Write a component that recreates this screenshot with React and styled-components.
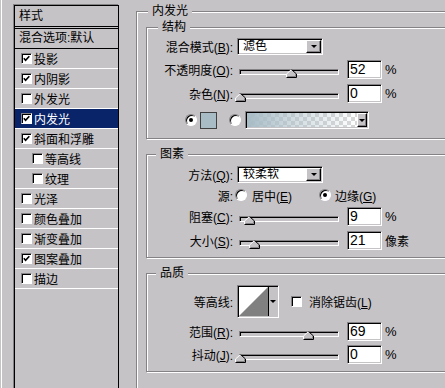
import React from 'react';
import styled, { createGlobalStyle } from 'styled-components';

const FACE = '#c6c3c6';
const SHADOW = '#848284';
const NAVY = '#0a246a';

const Global = createGlobalStyle`
  html, body { margin: 0; padding: 0; background: ${FACE}; overflow: hidden; }
  body {
    font-family: "Liberation Sans", "Noto Sans CJK SC", sans-serif;
    font-size: 12px;
    color: #000;
  }
  u { text-decoration: underline; text-underline-offset: 1px; }
`;

const Dialog = styled.div`
  display: flex;
  align-items: flex-start;
  width: 444px;
  height: 388px;
  overflow: hidden;
  margin-left: 1px;
  border-left: 1px solid #fff;
  box-sizing: border-box;
`;

/* ---------- left style list ---------- */
const StyleList = styled.div`
  flex: none;
  width: 105px;
  height: 400px;
  margin: 5px 0 0 12px;
  box-sizing: border-box;
  border: 1px solid #000;
  box-shadow: -1px -1px 0 ${SHADOW};
  background: ${FACE};
  display: flex;
  flex-direction: column;
`;

const ListHeader = styled.div`
  height: 20px;
  line-height: 20px;
  padding-left: 4px;
  border-bottom: 3px double #000;
`;

const BlendRow = styled.div`
  height: 19px;
  line-height: 19px;
  padding-left: 4px;
  border-bottom: 1px solid #000;
`;

const ListItem = styled.div`
  height: 19px;
  display: flex;
  align-items: center;
  gap: 2px;
  padding-left: ${p => (p.$sub ? 17 : 6)}px;
  border-bottom: 1px solid #fff;
  background: ${p => (p.$active ? NAVY : 'transparent')};
  color: ${p => (p.$active ? '#fff' : '#000')};
  white-space: nowrap;
`;

const CheckBox = styled.span`
  flex: none;
  width: 11px;
  height: 11px;
  box-sizing: border-box;
  background: #fff;
  border: 1px solid;
  border-color: ${SHADOW} #fff #fff ${SHADOW};
  box-shadow: inset 1px 1px 0 #000;
  display: flex;
  align-items: center;
  justify-content: center;
  margin-left: ${p => p.$ml || 0}px;
`;

const Check = ({ on, ml }) => (
  <CheckBox $ml={ml}>
    {on && (
      <svg width="7" height="7" viewBox="0 0 7 7">
        <path d="M0.8 3.2 L2.6 5.2 L6.3 1.2" stroke="#000" strokeWidth="1.6" fill="none" />
      </svg>
    )}
  </CheckBox>
);

/* ---------- right panel ---------- */
const OuterGroup = styled.div`
  flex: none;
  width: 340px;
  margin: 11px 0 0 17px;
  border: 1px solid ${SHADOW};
  box-shadow: inset 1px 1px 0 #fff, 1px 1px 0 #fff;
  padding: 0 9px 30px 9px;
  display: flex;
  flex-direction: column;
`;

const GroupBox = styled.div`
  border: 1px solid ${SHADOW};
  box-shadow: inset 1px 1px 0 #fff, 1px 1px 0 #fff;
  margin-top: ${p => p.$mt}px;
  padding-bottom: ${p => p.$pb}px;
  display: flex;
  flex-direction: column;
`;

const GroupTitle = styled.div`
  align-self: flex-start;
  height: 14px;
  line-height: 14px;
  margin: -8px 0 0 ${p => p.$ml}px;
  padding: 0 4px;
  background: ${FACE};
  white-space: nowrap;
`;

const Row = styled.div`
  height: ${p => p.$h}px;
  display: flex;
  align-items: center;
  padding-left: ${p => p.$pl || 0}px;
  white-space: nowrap;
`;

const Label = styled.span`
  flex: none;
  width: 86px;
  text-align: right;
`;

const Select = styled.div`
  flex: none;
  width: 86px;
  height: 17px;
  margin-left: 4px;
  box-sizing: border-box;
  border: 1px solid;
  border-color: ${SHADOW} #fff #fff ${SHADOW};
  box-shadow: inset 1px 1px 0 #000, inset -1px -1px 0 ${FACE};
  background: #fff;
  display: flex;
  align-items: center;
  padding: 0 1px 0 5px;
`;

const SelectText = styled.span`
  flex: 1;
  line-height: 14px;
`;

const DropButton = styled.span`
  flex: none;
  width: ${p => p.$w || 15}px;
  height: ${p => p.$h || 13}px;
  box-sizing: border-box;
  background: ${FACE};
  border: 1px solid;
  border-color: #fff #000 #000 #fff;
  box-shadow: inset -1px -1px 0 ${SHADOW};
  display: flex;
  align-items: center;
  justify-content: center;
`;

const Arrow = styled.span`
  width: 0;
  height: 0;
  border-left: 3px solid transparent;
  border-right: 3px solid transparent;
  border-top: 3px solid #000;
`;

const SliderWrap = styled.div`
  flex: none;
  position: relative;
  width: 110px;
  height: 12px;
  margin-left: 2px;
`;

const Track = styled.div`
  height: 6px;
  margin: 5px 6px 0 4px;
  box-sizing: border-box;
  border: 1px solid;
  border-color: ${SHADOW} #fff #fff ${SHADOW};
  box-shadow: inset 1px 1px 0 #000;
  background: ${FACE};
`;

const Thumb = styled.svg`
  position: absolute;
  top: 5px;
  display: block;
`;

const Slider = ({ pct }) => (
  <SliderWrap>
    <Track />
    <Thumb width="11" height="9" viewBox="0 0 11 9" style={{ left: Math.round(pct * 0.98) }}>
      <path d="M5.5 0.5 L10.5 5 V8.5 H0.5 V5 Z" fill={FACE} />
      <path d="M0.5 8.5 V5 L5.5 0.5" stroke="#fff" fill="none" />
      <path d="M5.5 0.5 L10.5 5 V8.5 H0.5" stroke="#000" fill="none" />
      <path d="M9.5 5.4 V7.5 H1.5" stroke={SHADOW} fill="none" />
    </Thumb>
  </SliderWrap>
);

const Field = styled.div`
  flex: none;
  width: 35px;
  height: 19px;
  margin-left: 2px;
  box-sizing: border-box;
  border: 1px solid;
  border-color: ${SHADOW} #fff #fff ${SHADOW};
  box-shadow: inset 1px 1px 0 #000, inset -1px -1px 0 ${FACE};
  background: #fff;
  font-size: 14px;
  line-height: 17px;
  padding-left: 2px;
`;

const Unit = styled.span`
  margin-left: 3px;
  font-size: ${p => (p.$cjk ? 12 : 13)}px;
`;

const Radio = styled.span`
  flex: none;
  width: 12px;
  height: 12px;
  box-sizing: border-box;
  border-radius: 50%;
  border: 1px solid;
  border-color: ${SHADOW} #fff #fff ${SHADOW};
  box-shadow: inset 1px 1px 0 #000;
  background: #fff;
  display: flex;
  align-items: center;
  justify-content: center;
  margin-left: ${p => p.$ml || 0}px;
  &::after {
    content: '';
    width: 4px;
    height: 4px;
    border-radius: 50%;
    background: #000;
    display: ${p => (p.$on ? 'block' : 'none')};
  }
`;

const Swatch = styled.span`
  flex: none;
  width: 17px;
  height: 17px;
  margin-left: 3px;
  box-sizing: border-box;
  border: 1px solid #404040;
  background: #a8bcc6;
`;

const GradientPicker = styled.div`
  flex: none;
  width: 124px;
  height: 18px;
  margin-left: 4px;
  box-sizing: border-box;
  border: 1px solid;
  border-color: ${SHADOW} #fff #fff ${SHADOW};
  box-shadow: inset 1px 1px 0 #000, inset -1px -1px 0 ${FACE};
  display: flex;
  padding: 1px 1px 1px 1px;
`;

const GradientStrip = styled.span`
  flex: 1;
  background:
    linear-gradient(to right, #a8bcc6 0%, rgba(168, 188, 198, 0.55) 40%, rgba(168, 188, 198, 0) 100%),
    repeating-conic-gradient(#d8d8d8 0 25%, #ffffff 0 50%) 0 0 / 8px 8px;
`;

const OptionText = styled.span`
  margin-left: ${p => p.$ml || 5}px;
`;

const Option = styled.span`
  flex: none;
  display: flex;
  align-items: center;
  width: ${p => (p.$w ? `${p.$w}px` : 'auto')};
  margin-left: ${p => p.$ml || 0}px;
`;

const ContourPicker = styled.div`
  flex: none;
  width: 42px;
  height: 33px;
  margin-left: 4px;
  box-sizing: border-box;
  border: 1px solid;
  border-color: ${SHADOW} #fff #fff ${SHADOW};
  box-shadow: inset 1px 1px 0 #000, inset -1px -1px 0 ${FACE};
  display: flex;
  padding: 1px 1px 1px 1px;
`;

const ContourPreview = styled.svg`
  display: block;
  flex: none;
  border-right: 1px solid #000;
`;

const ContourArrow = styled.span`
  flex: 1;
  background: ${FACE};
  display: flex;
  align-items: center;
  justify-content: center;
`;

const items = [
  { t: '投影', on: true },
  { t: '内阴影', on: true },
  { t: '外发光', on: false },
  { t: '内发光', on: true, active: true },
  { t: '斜面和浮雕', on: true },
  { t: '等高线', on: false, sub: true },
  { t: '纹理', on: false, sub: true },
  { t: '光泽', on: false },
  { t: '颜色叠加', on: false },
  { t: '渐变叠加', on: false },
  { t: '图案叠加', on: true },
  { t: '描边', on: false },
];

export default function App() {
  return (
    <>
      <Global />
      <Dialog>
        <StyleList>
          <ListHeader>样式</ListHeader>
          <BlendRow>混合选项:默认</BlendRow>
          {items.map(it => (
            <ListItem key={it.t} $sub={it.sub} $active={it.active}>
              <Check on={it.on} />
              <span>{it.t}</span>
            </ListItem>
          ))}
        </StyleList>

        <OuterGroup>
          <GroupTitle $ml={2}>内发光</GroupTitle>

          <GroupBox $mt={9} $pb={4}>
            <GroupTitle $ml={11}>结构</GroupTitle>
            <Row $h={24}>
              <Label>混合模式(<u>B</u>):</Label>
              <Select>
                <SelectText>滤色</SelectText>
                <DropButton><Arrow /></DropButton>
              </Select>
            </Row>
            <Row $h={23}>
              <Label>不透明度(<u>O</u>):</Label>
              <Slider pct={52} />
              <Field>52</Field>
              <Unit>%</Unit>
            </Row>
            <Row $h={25}>
              <Label>杂色(<u>N</u>):</Label>
              <Slider pct={0} />
              <Field>0</Field>
              <Unit>%</Unit>
            </Row>
            <Row $h={28} $pl={38}>
              <Radio $on />
              <Swatch />
              <Radio $ml={12} />
              <GradientPicker>
                <GradientStrip />
                <DropButton $w={10} $h={14}><Arrow /></DropButton>
              </GradientPicker>
            </Row>
          </GroupBox>

          <GroupBox $mt={15} $pb={6}>
            <GroupTitle $ml={9}>图素</GroupTitle>
            <Row $h={26}>
              <Label>方法(<u>Q</u>):</Label>
              <Select>
                <SelectText>较柔软</SelectText>
                <DropButton><Arrow /></DropButton>
              </Select>
            </Row>
            <Row $h={16}>
              <Label>源:</Label>
              <Option $w={84} $ml={2}>
                <Radio />
                <OptionText>居中(<u>E</u>)</OptionText>
              </Option>
              <Option>
                <Radio $on />
                <OptionText $ml={4}>边缘(<u>G</u>)</OptionText>
              </Option>
            </Row>
            <Row $h={27}>
              <Label>阻塞(<u>C</u>):</Label>
              <Slider pct={9} />
              <Field>9</Field>
              <Unit>%</Unit>
            </Row>
            <Row $h={21}>
              <Label>大小(<u>S</u>):</Label>
              <Slider pct={14} />
              <Field>21</Field>
              <Unit $cjk>像素</Unit>
            </Row>
          </GroupBox>

          <GroupBox $mt={15} $pb={3}>
            <GroupTitle $ml={9}>品质</GroupTitle>
            <Row $h={42}>
              <Label>等高线:</Label>
              <ContourPicker>
                <ContourPreview width="29" height="29" viewBox="0 0 29 29">
                  <rect width="29" height="29" fill="#fff" />
                  <polygon points="0,29 29,0 29,29" fill="#808080" />
                </ContourPreview>
                <ContourArrow><Arrow /></ContourArrow>
              </ContourPicker>
              <Check on={false} ml={12} />
              <OptionText $ml={7}>消除锯齿(<u>L</u>)</OptionText>
            </Row>
            <Row $h={19}>
              <Label>范围(<u>R</u>):</Label>
              <Slider pct={69} />
              <Field>69</Field>
              <Unit>%</Unit>
            </Row>
            <Row $h={27}>
              <Label>抖动(<u>J</u>):</Label>
              <Slider pct={0} />
              <Field>0</Field>
              <Unit>%</Unit>
            </Row>
          </GroupBox>
        </OuterGroup>
      </Dialog>
    </>
  );
}
